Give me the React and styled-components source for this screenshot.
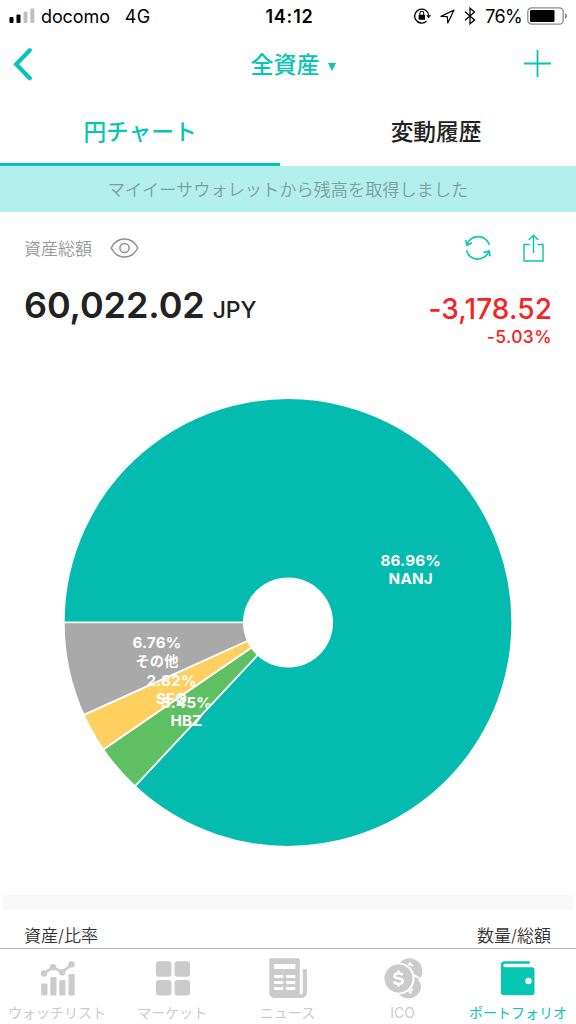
import styled, { createGlobalStyle } from 'styled-components';

const GlobalStyle = createGlobalStyle`
  * {
    box-sizing: border-box;
  }
  body {
    margin: 0;
    background: #fff;
    color: #222;
    font-family: Inter, "Noto Sans CJK JP", sans-serif;
  }
  svg {
    display: block;
    flex: none;
  }
`;

const PageWrapper = styled.div`
  display: flex;
  flex-direction: column;
  width: 576px;
  height: 1024px;
  overflow: hidden;
`;

const StatusBar = styled.div`
  display: grid;
  grid-template-columns: 1fr auto 1fr;
  align-items: center;
  height: 32px;
  padding: 0 8px 0 9px;
  color: #000;
  font-size: 18px;
`;
const StatusLeft = styled.div`
  display: flex;
  align-items: center;
`;
const StatusRight = styled.div`
  display: flex;
  align-items: center;
  justify-content: flex-end;
`;
const StatusIcons = styled.div`
  display: flex;
  align-items: center;
  gap: 9px;
`;
const Carrier = styled.span`
  margin-left: 6px;
  letter-spacing: -0.1px;
`;
const Network = styled.span`
  margin-left: 15px;
  letter-spacing: 0.2px;
`;
const Clock = styled.span`
  padding-left: 2px;
  font-weight: 600;
  letter-spacing: 0.8px;
`;
const Percent = styled.span`
  margin: 0 5px 0 9px;
  letter-spacing: -0.7px;
`;

const Header = styled.header`
  display: grid;
  grid-template-columns: 1fr auto 1fr;
  align-items: center;
  height: 66px;
  padding: 0 25px 2px 11px;
`;
const Title = styled.h1`
  display: flex;
  align-items: center;
  gap: 8px;
  margin: 0;
  padding: 2px 0 0 24px;
  color: #06c5b3;
  font-size: 23px;
  font-weight: 500;
  line-height: 32px;
`;
const Caret = styled.span`
  margin-top: 4px;
  border: 4.5px solid transparent;
  border-top: 8px solid #06c5b3;
  border-bottom: 0;
`;
const HeaderRight = styled.div`
  justify-self: end;
  padding-bottom: 1px;
`;

const Tabs = styled.nav`
  display: flex;
  gap: 16px;
  height: 68px;
`;
const Tab = styled.a`
  display: flex;
  flex: 1;
  align-items: center;
  justify-content: center;
  border-bottom: 3px solid ${(props) => (props.$active ? '#06c5b3' : 'transparent')};
  color: ${(props) => (props.$active ? '#06c5b3' : '#222')};
  font-size: 22.7px;
  font-weight: 500;
`;

const Notice = styled.div`
  display: flex;
  align-items: center;
  justify-content: center;
  height: 46px;
  padding-bottom: 2px;
  background: #b3f0eb;
  color: #7d9f9c;
  font-size: 17.2px;
  font-weight: 350;
`;

const Summary = styled.section`
  padding: 20px 24px 0 25px;
`;
const SummaryTop = styled.div`
  display: flex;
  align-items: center;
  height: 32px;
`;
const SummaryLabel = styled.span`
  margin: 0 18px 2px -1px;
  color: #999;
  font-size: 17px;
  font-weight: 350;
`;
const Actions = styled.div`
  display: flex;
  align-items: center;
  gap: 32px;
  margin-left: auto;
  padding-right: 8px;
`;
const Amounts = styled.div`
  display: flex;
  justify-content: space-between;
  margin-top: 20px;
`;
const Total = styled.div`
  margin-left: -1px;
  font-size: 36px;
  font-weight: 600;
  line-height: 42px;
  letter-spacing: -0.1px;
`;
const Currency = styled.span`
  margin-left: 8px;
  font-size: 23px;
  font-weight: 500;
`;
const Change = styled.div`
  display: flex;
  flex-direction: column;
  align-items: flex-end;
  color: #f82222;
  font-weight: 500;
`;
const ChangeValue = styled.span`
  margin-top: 9px;
  font-size: 28px;
  line-height: 32px;
  letter-spacing: 0.1px;
`;
const ChangeRate = styled.span`
  font-size: 17.5px;
  line-height: 24px;
  letter-spacing: 0.4px;
`;

const ChartArea = styled.div`
  height: 546px;
`;
const SliceLabel = styled.text`
  fill: #fff;
  font-size: ${(props) => (props.$small ? '14.2px' : '15.2px')};
  font-weight: 650;
  letter-spacing: 0.2px;
  text-anchor: middle;
`;

const Divider = styled.div`
  height: 15px;
  margin: 0 2px;
  background: #f8f8f8;
`;
const ListHeader = styled.div`
  display: flex;
  justify-content: space-between;
  height: 38px;
  padding: 14px 25px 0 24px;
  color: #333;
  font-size: 17px;
  font-weight: 350;
  line-height: 25px;
`;

const TabBar = styled.nav`
  display: flex;
  height: 76px;
  border-top: 1px solid #b5b5b5;
`;
const TabItem = styled.a`
  display: flex;
  flex: 1;
  flex-direction: column;
  align-items: center;
  padding-top: 9px;
  color: ${(props) => (props.$active ? '#06c5b3' : '#cbcbcb')};
  font-size: 14px;
  line-height: 20px;
  white-space: nowrap;
`;
const TabLabel = styled.span`
  margin: 3px 1px 0 0;
`;

const slices = [
  { name: 'NANJ', value: 86.96, color: '#03bbaf', x: 410.7, y: 566 },
  { name: 'HBZ', value: 3.45, color: '#5fbf63', x: 186.5, y: 707.5 },
  { name: 'SFO', value: 2.82, color: '#ffd05f', x: 171.5, y: 685.5 },
  { name: 'その他', value: 6.76, color: '#a9a9a9', x: 157, y: 648 },
];

const CX = 288;
const CY = 622.5;
const OUTER = 224.2;
const INNER = 44.2;
const CHART_TOP = 349;

function point(radius, share) {
  const angle = Math.PI + share * Math.PI * 2;
  return `${CX + radius * Math.cos(angle)} ${CY + radius * Math.sin(angle)}`;
}

function slicePath(start, end) {
  const large = end - start > 0.5 ? 1 : 0;
  return `M${point(OUTER, start)} A${OUTER} ${OUTER} 0 ${large} 1 ${point(OUTER, end)}
    L${point(INNER, end)} A${INNER} ${INNER} 0 ${large} 0 ${point(INNER, start)} Z`;
}

function PieChart() {
  const total = slices.reduce((sum, slice) => sum + slice.value, 0);
  let position = 0;
  const paths = slices.map((slice) => {
    const start = position;
    position += slice.value / total;
    return (
      <path
        key={slice.name}
        d={slicePath(start, position)}
        fill={slice.color}
        stroke="#fff"
        strokeWidth="1.7"
        strokeLinejoin="round"
      />
    );
  });
  return (
    <svg width="576" height="546" viewBox={`0 ${CHART_TOP} 576 546`}>
      {paths}
      {slices.map((slice) => (
        <g key={slice.name}>
          <SliceLabel x={slice.x} y={slice.y}>
            {slice.value.toFixed(2)}%
          </SliceLabel>
          <SliceLabel x={slice.x} y={slice.y + 18.3} $small={slice.name === 'その他'}>
            {slice.name}
          </SliceLabel>
        </g>
      ))}
    </svg>
  );
}

function SignalIcon() {
  return (
    <svg width="26" height="16" viewBox="0 0 26 16">
      <rect x="0.5" y="9" width="4" height="6" rx="1" />
      <rect x="7.5" y="6.5" width="4" height="8.5" rx="1" />
      <rect x="14.5" y="3.5" width="4" height="11.5" rx="1" fill="#bfbfbf" />
      <rect x="21.3" y="0.5" width="4" height="14.5" rx="1" fill="#bfbfbf" />
    </svg>
  );
}

function LockIcon() {
  return (
    <svg width="17" height="18" viewBox="0 0 17 18" fill="none" stroke="#000" strokeWidth="1.3">
      <path d="M12.5 14.2A7 7 0 1 1 14.7 8.5" />
      <path d="M12.3 8.3h4.7l-2.3 2.9z" fill="#000" stroke="none" />
      <rect x="4.6" y="7.8" width="6.4" height="5" rx="0.6" fill="#000" stroke="none" />
      <path d="M5.9 8V6.2a1.9 1.9 0 0 1 3.8 0V8" strokeWidth="1.1" />
    </svg>
  );
}

function LocationIcon() {
  return (
    <svg width="15" height="15" viewBox="0 0 15 15" fill="none" stroke="#000" strokeWidth="1.2" strokeLinejoin="round">
      <path d="M14 1 1 7.4l6.300.3.500 6.300z" />
    </svg>
  );
}

function BluetoothIcon() {
  return (
    <svg width="12" height="18" viewBox="0 0 12 18" fill="none" stroke="#000" strokeWidth="1.3">
      <path d="M1 4.8 10.5 13 6 16.8V1.2L10.5 5 1 13.2" />
    </svg>
  );
}

function BatteryIcon() {
  return (
    <svg width="41" height="18" viewBox="0 0 41 18">
      <rect x="0.8" y="0.8" width="35.4" height="16.4" rx="4" fill="none" stroke="#8a8a8a" strokeWidth="1.3" />
      <rect x="3" y="3" width="24.5" height="12" rx="1.2" />
      <path d="M38 6.2c2.6.8 2.6 4.8 0 5.6z" fill="#8a8a8a" />
    </svg>
  );
}

function BackIcon() {
  return (
    <svg width="22" height="34" viewBox="0 0 22 34" fill="none" stroke="#06c5b3" strokeWidth="4.2" strokeLinecap="round" strokeLinejoin="miter">
      <path d="M18.8 3.2 5.2 17.3 18.8 31.2" />
    </svg>
  );
}

function PlusIcon() {
  return (
    <svg width="27" height="27" viewBox="0 0 27 27" stroke="#06c5b3" strokeWidth="1.8">
      <path d="M13.5 0v27M0 13.5h27" />
    </svg>
  );
}

function EyeIcon() {
  return (
    <svg width="29" height="20" viewBox="0 0 29 20" fill="none" stroke="#8f8f8f" strokeWidth="1.5">
      <path d="M1.2 10C4 4.5 8.8 1 14.5 1S25 4.5 27.8 10C25 15.5 20.2 19 14.5 19S4 15.5 1.2 10z" strokeLinejoin="round" />
      <circle cx="14.5" cy="10" r="4.6" />
    </svg>
  );
}

function RefreshIcon() {
  return (
    <svg width="26" height="26" viewBox="0 0 26 26" fill="none" stroke="#06c5b3" strokeWidth="1.6">
      <path d="M24.4 10A11.8 11.8 0 0 0 1.8 10" />
      <path d="M.6 5 2 10.4l4.9-2.6" />
      <path d="M1.4 15.4a11.8 11.8 0 0 0 22.6 0.6" />
      <path d="M18.5 17.6l5.7-1.5.8 5.2" />
    </svg>
  );
}

function ShareIcon() {
  return (
    <svg width="21" height="28" viewBox="0 0 21 28" fill="none" stroke="#06c5b3" strokeWidth="1.4">
      <path d="M6.5 10.5H1V27h19V10.5h-5.5" />
      <path d="M10.5 19V1.3M5.8 6l4.7-4.7L15.2 6" />
    </svg>
  );
}

function WatchlistIcon() {
  return (
    <svg width="40" height="42" viewBox="0 0 40 42" fill="currentColor">
      <rect x="3.2" y="25.5" width="6.2" height="12" rx="1" />
      <rect x="12.3" y="19" width="6.2" height="18.5" rx="1" />
      <rect x="21.3" y="22" width="6.2" height="15.5" rx="1" />
      <rect x="30.5" y="16" width="6.2" height="21.5" rx="1" />
      <path d="M6 15.5 15 9.3l9.2 5L33.5 6.5" fill="none" stroke="currentColor" strokeWidth="2.5" />
      <circle cx="6" cy="15.5" r="3.2" />
      <circle cx="15" cy="9.3" r="3.2" />
      <circle cx="24.2" cy="14.3" r="3.2" />
      <circle cx="33.5" cy="6.5" r="3.2" />
    </svg>
  );
}

function MarketIcon() {
  return (
    <svg width="40" height="42" viewBox="0 0 40 42" fill="currentColor">
      <rect x="3" y="3.3" width="15.5" height="15.5" rx="3" />
      <rect x="21.5" y="3.3" width="15.5" height="15.5" rx="3" />
      <rect x="3" y="22" width="15.5" height="15.5" rx="3" />
      <rect x="21.5" y="22" width="15.5" height="15.5" rx="3" />
    </svg>
  );
}

function NewsIcon() {
  return (
    <svg width="40" height="42" viewBox="0 0 40 42" fill="currentColor">
      <path d="M2.5.3H30.3a1.5 1.5 0 0 1 1.5 1.5V34.5q0 2 1.5 2t1.5-2V11h2.8a1.3 1.3 0 0 1 1.3 1.3V35a5 5 0 0 1-5 5H6.3a5 5 0 0 1-5-5V1.6A1.3 1.3 0 0 1 2.5.3z" />
      <g fill="#fff">
        <rect x="6" y="6" width="21.5" height="5" />
        <rect x="6" y="17" width="9.3" height="3" />
        <rect x="18" y="17" width="9.3" height="3" />
        <rect x="6" y="23" width="9.3" height="3" />
        <rect x="18" y="23" width="9.3" height="3" />
        <rect x="6" y="29" width="9.3" height="3" />
        <rect x="18" y="29" width="9.3" height="3" />
      </g>
    </svg>
  );
}

function CoinsIcon() {
  return (
    <svg width="40" height="42" viewBox="0 0 40 42" fill="none" stroke="#fff">
      <circle cx="25" cy="27.5" r="12.7" fill="currentColor" stroke="none" />
      <circle cx="26.5" cy="13.2" r="14.6" fill="#fff" stroke="none" />
      <circle cx="26.5" cy="13.2" r="12.9" fill="currentColor" stroke="none" />
      {/* lower coin shows again beside the upper one */}
      <path d="M29.5 18q8.500 4 8.500 12.500a12.700 12.700 0 0 1-12 9.700z" fill="currentColor" strokeWidth="0" />
      <path d="M28.500 17q8 .5 10 8" strokeWidth="1.8" />
      <path d="M25 6.5q3-1 5 1.500M27 4.500V7.500M25.500 33.500q3 0 4-3M27.500 32v3.500" strokeWidth="2" />
      <circle cx="15.5" cy="20.5" r="16" fill="#fff" stroke="none" />
      <circle cx="15.5" cy="20.5" r="14" fill="currentColor" stroke="none" />
      <path d="M19.5 17.3c-.7-1.5-2.2-2-4-2-2.2 0-4 .9-4 2.6 0 3.8 8.3 1.4 8.3 5.2 0 1.8-1.9 2.8-4.3 2.8-2.1 0-3.8-.8-4.5-2.5M15.5 12.5v3M15.5 25.8v3" strokeWidth="2.5" />
    </svg>
  );
}

function WalletIcon() {
  return (
    <svg width="40" height="42" viewBox="0 0 40 42" fill="currentColor">
      <path d="M6.5 3.2H30.8a1.2 1.2 0 0 1 0 2.5H7q-1.700 0-1.700 1.800T7 9.300H34a2.500 2.500 0 0 1 2.500 2.500V34.600A2.700 2.700 0 0 1 33.800 37.300H5.800A2.700 2.700 0 0 1 3 34.600V6.700a3.500 3.500 0 0 1 3.500-3.500z" />
      <circle cx="30.5" cy="23" r="3.2" fill="#fff" />
    </svg>
  );
}

const tabItems = [
  { label: 'ウォッチリスト', Icon: WatchlistIcon },
  { label: 'マーケット', Icon: MarketIcon },
  { label: 'ニュース', Icon: NewsIcon },
  { label: 'ICO', Icon: CoinsIcon },
  { label: 'ポートフォリオ', Icon: WalletIcon, active: true },
];

function App() {
  return (
    <>
      <GlobalStyle />
      <PageWrapper>
        <StatusBar>
          <StatusLeft>
            <SignalIcon />
            <Carrier>docomo</Carrier>
            <Network>4G</Network>
          </StatusLeft>
          <Clock>14:12</Clock>
          <StatusRight>
            <StatusIcons>
              <LockIcon />
              <LocationIcon />
              <BluetoothIcon />
            </StatusIcons>
            <Percent>76%</Percent>
            <BatteryIcon />
          </StatusRight>
        </StatusBar>
        <Header>
          <BackIcon />
          <Title>
            全資産
            <Caret />
          </Title>
          <HeaderRight>
            <PlusIcon />
          </HeaderRight>
        </Header>
        <Tabs>
          <Tab $active>円チャート</Tab>
          <Tab>変動履歴</Tab>
        </Tabs>
        <Notice>マイイーサウォレットから残高を取得しました</Notice>
        <Summary>
          <SummaryTop>
            <SummaryLabel>資産総額</SummaryLabel>
            <EyeIcon />
            <Actions>
              <RefreshIcon />
              <ShareIcon />
            </Actions>
          </SummaryTop>
          <Amounts>
            <Total>
              60,022.02
              <Currency>JPY</Currency>
            </Total>
            <Change>
              <ChangeValue>-3,178.52</ChangeValue>
              <ChangeRate>-5.03%</ChangeRate>
            </Change>
          </Amounts>
        </Summary>
        <ChartArea>
          <PieChart />
        </ChartArea>
        <Divider />
        <ListHeader>
          <span>資産/比率</span>
          <span>数量/総額</span>
        </ListHeader>
        <TabBar>
          {tabItems.map(({ label, Icon, active }) => (
            <TabItem key={label} $active={active}>
              <Icon />
              <TabLabel>{label}</TabLabel>
            </TabItem>
          ))}
        </TabBar>
      </PageWrapper>
    </>
  );
}

export default App;
